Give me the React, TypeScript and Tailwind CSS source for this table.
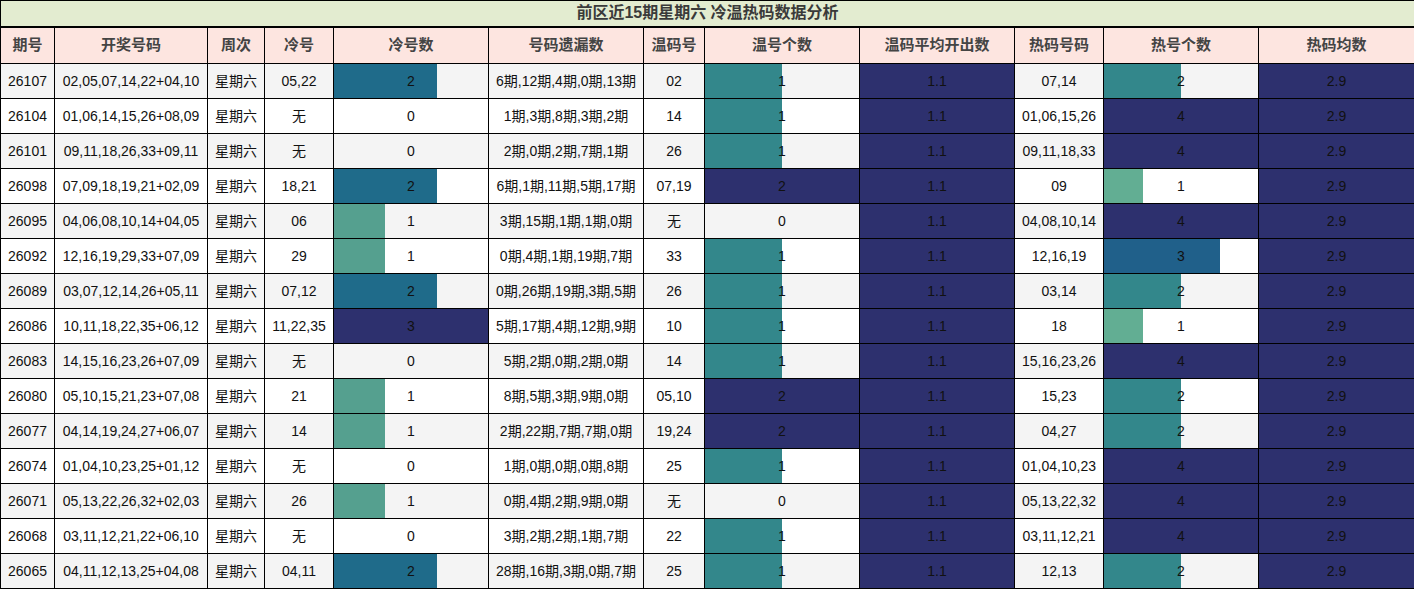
import React from 'react';

type Row = [number, string, string, number, string, string, number, string, number];

const rows: Row[] = [
  [26107, '02,05,07,14,22+04,10', '05,22', 2, '6期,12期,4期,0期,13期', '02', 1, '07,14', 2],
  [26104, '01,06,14,15,26+08,09', '无', 0, '1期,3期,8期,3期,2期', '14', 1, '01,06,15,26', 4],
  [26101, '09,11,18,26,33+09,11', '无', 0, '2期,0期,2期,7期,1期', '26', 1, '09,11,18,33', 4],
  [26098, '07,09,18,19,21+02,09', '18,21', 2, '6期,1期,11期,5期,17期', '07,19', 2, '09', 1],
  [26095, '04,06,08,10,14+04,05', '06', 1, '3期,15期,1期,1期,0期', '无', 0, '04,08,10,14', 4],
  [26092, '12,16,19,29,33+07,09', '29', 1, '0期,4期,1期,19期,7期', '33', 1, '12,16,19', 3],
  [26089, '03,07,12,14,26+05,11', '07,12', 2, '0期,26期,19期,3期,5期', '26', 1, '03,14', 2],
  [26086, '10,11,18,22,35+06,12', '11,22,35', 3, '5期,17期,4期,12期,9期', '10', 1, '18', 1],
  [26083, '14,15,16,23,26+07,09', '无', 0, '5期,2期,0期,2期,0期', '14', 1, '15,16,23,26', 4],
  [26080, '05,10,15,21,23+07,08', '21', 1, '8期,5期,3期,9期,0期', '05,10', 2, '15,23', 2],
  [26077, '04,14,19,24,27+06,07', '14', 1, '2期,22期,7期,7期,0期', '19,24', 2, '04,27', 2],
  [26074, '01,04,10,23,25+01,12', '无', 0, '1期,0期,0期,0期,8期', '25', 1, '01,04,10,23', 4],
  [26071, '05,13,22,26,32+02,03', '26', 1, '0期,4期,2期,9期,0期', '无', 0, '05,13,22,32', 4],
  [26068, '03,11,12,21,22+06,10', '无', 0, '3期,2期,2期,1期,7期', '22', 1, '03,11,12,21', 4],
  [26065, '04,11,12,13,25+04,08', '04,11', 2, '28期,16期,3期,0期,7期', '25', 1, '12,13', 2],
];

const headers = ['期号', '开奖号码', '周次', '冷号', '冷号数', '号码遗漏数', '温码号', '温号个数', '温码平均开出数', '热码号码', '热号个数', '热码均数'];
const widths = [54, 153, 57, 69, 155, 155, 61, 155, 155, 89, 155, 156];

// colour scale by how full the bar is
const barColor = (f: number) => {
  if (f >= 1) return '#2d306e';
  if (f >= 0.74) return '#20608a';
  if (f >= 0.6) return '#1f6b8a';
  if (f >= 0.45) return '#33878b';
  if (f >= 0.3) return '#55a08f';
  return '#62ae93';
};

function BarCell({ value, max }: { value: number; max: number }) {
  const f = value / max;
  return (
    <td className="p-0 border border-black">
      <div className="relative h-[34px] flex items-center justify-center">
        {value > 0 && (
          <div
            className="absolute left-0 top-0 bottom-0"
            style={{ width: `${f * 100}%`, backgroundColor: barColor(f) }}
          />
        )}
        <span className="relative">{value}</span>
      </div>
    </td>
  );
}

function FillCell({ value }: { value: string }) {
  return (
    <td className="p-0 border border-black bg-[#2d306e]">
      <div className="h-[34px] flex items-center justify-center">{value}</div>
    </td>
  );
}

export default function App() {
  return (
    <div className="w-[1414px] bg-white" style={{ fontFamily: '"Liberation Sans", "Noto Sans CJK SC", sans-serif' }}>
      <table className="table-fixed border-collapse w-[1414px] text-[14px] text-[#111]">
        <colgroup>
          {widths.map((w, i) => (
            <col key={i} style={{ width: w }} />
          ))}
        </colgroup>
        <thead>
          <tr>
            <th colSpan={12} className="h-[26px] p-0 border border-black border-b-2 bg-[#e3ecd0] text-[16px] font-bold text-[#3a3a3a]">
              前区近15期星期六 冷温热码数据分析
            </th>
          </tr>
          <tr>
            {headers.map(h => (
              <th key={h} className="h-[37px] p-0 border border-black bg-[#fde5e0] text-[15px] font-bold text-[#444]">
                {h}
              </th>
            ))}
          </tr>
        </thead>
        <tbody>
          {rows.map((r, i) => (
            <tr key={r[0]} className={i % 2 === 0 ? 'bg-[#f4f4f4]' : 'bg-white'}>
              <td className="p-0 h-[35px] border border-black text-center">{r[0]}</td>
              <td className="p-0 border border-black text-center">{r[1]}</td>
              <td className="p-0 border border-black text-center">星期六</td>
              <td className="p-0 border border-black text-center">{r[2]}</td>
              <BarCell value={r[3]} max={3} />
              <td className="p-0 border border-black text-center">{r[4]}</td>
              <td className="p-0 border border-black text-center">{r[5]}</td>
              <BarCell value={r[6]} max={2} />
              <FillCell value="1.1" />
              <td className="p-0 border border-black text-center">{r[7]}</td>
              <BarCell value={r[8]} max={4} />
              <FillCell value="2.9" />
            </tr>
          ))}
        </tbody>
      </table>
    </div>
  );
}
